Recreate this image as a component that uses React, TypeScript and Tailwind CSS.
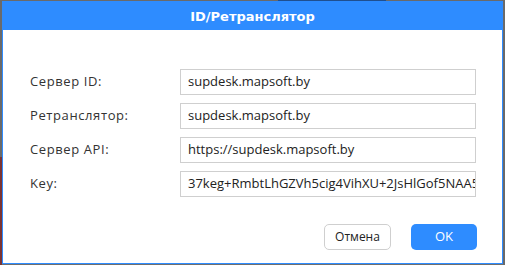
import React from "react";

const rows: { label: string; value: string }[] = [
  { label: "Сервер ID:", value: "supdesk.mapsoft.by" },
  { label: "Ретранслятор:", value: "supdesk.mapsoft.by" },
  { label: "Сервер API:", value: "https://supdesk.mapsoft.by" },
  { label: "Key:", value: "37keg+RmbtLhGZVh5cig4VihXU+2JsHlGof5NAA5Zk1xQ" },
];

export default function App() {
  return (
    <div className="w-[505px] h-[265px] bg-[#6f6f6f] flex flex-col overflow-hidden" style={{ fontFamily: "'Open Sans', 'Noto Sans', sans-serif" }}>
      <div className="h-[1px] flex shrink-0">
        <div className="w-[278px] bg-[#6a6a6a]" />
        <div className="w-[108px] bg-[#1f4f8f]" />
        <div className="flex-1 bg-[#6a6a6a]" />
      </div>
      <div className="flex flex-1">
        <div className="w-[2px] flex flex-col">
          <div className="h-[156px] bg-[#6a6a6a]" />
          <div className="flex-1 bg-[#7a3434]" />
        </div>
        <div className="w-[501px] h-[263px] border border-[#2e8cff] bg-white flex flex-col">
          <div className="h-[28px] bg-[#2e8cff] flex items-center justify-center shrink-0">
            <span className="text-white font-bold text-[13px] leading-none" style={{ fontFamily: "'DejaVu Sans', Verdana, sans-serif" }}>
              ID/Ретранслятор
            </span>
          </div>
          <div className="flex-1 flex flex-col pt-[39px] pl-[27px] pr-[25px] pb-[13px]">
            <div className="flex flex-col gap-[8px]">
              {rows.map((r) => (
                <div key={r.label} className="flex items-center h-[26px]">
                  <div className="w-[150px] text-[13px] tracking-[0.6px] text-[#333333]">{r.label}</div>
                  <div className="w-[296px] h-[26px] border border-[#cfcfcf] flex items-center pl-[7px] overflow-hidden whitespace-nowrap text-[13px] text-[#222222]">
                    {r.value}
                  </div>
                </div>
              ))}
            </div>
            <div className="flex-1" />
            <div className="flex justify-end gap-[20px]">
              <div className="w-[67px] h-[26px] border border-[#cfcfcf] rounded-[5px] flex items-center justify-center text-[12px] text-[#222222]">
                Отмена
              </div>
              <div className="w-[66px] h-[26px] bg-[#2e8cff] rounded-[5px] flex items-center justify-center text-[13px] text-white">
                OK
              </div>
            </div>
          </div>
        </div>
        <div className="w-[2px] bg-[#6a6a6a]" />
      </div>
    </div>
  );
}
